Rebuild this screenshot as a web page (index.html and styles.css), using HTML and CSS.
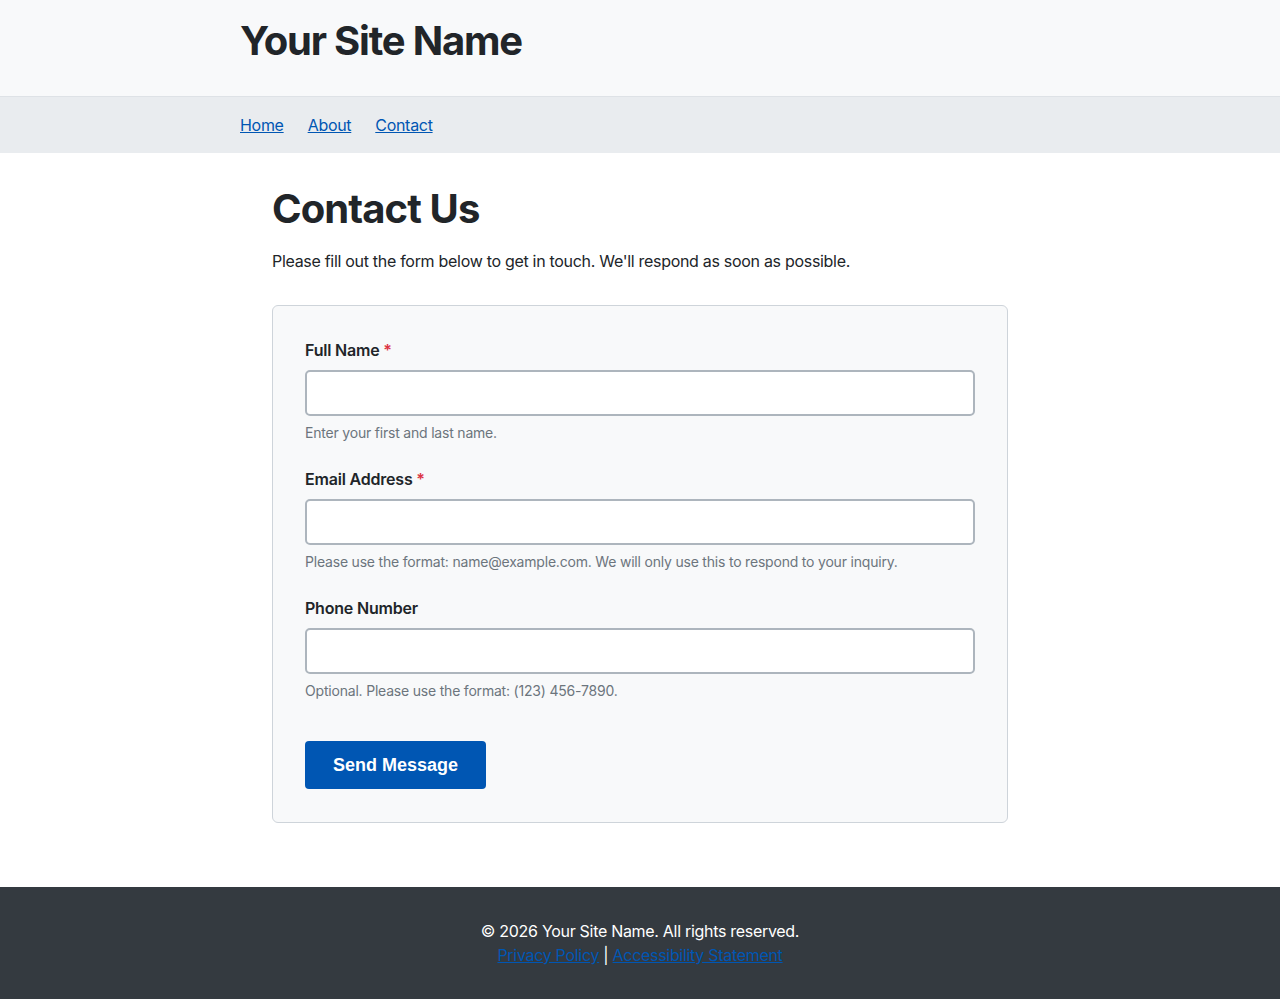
FILE: index.html
```html
<!DOCTYPE html>
<html lang="en">
<head>
<meta charset="utf-8">
<title>Contact Us - Your Site Name</title>
<link rel="stylesheet" href="styles.css">
</head>
<body>
<header class="site-header">
  <div class="container">
    <h1 class="site-name">Your Site Name</h1>
  </div>
</header>
<nav class="site-nav">
  <div class="container">
    <ul class="nav-list">
      <li><a href="#">Home</a></li>
      <li><a href="#">About</a></li>
      <li><a href="#">Contact</a></li>
    </ul>
  </div>
</nav>
<main class="main">
  <div class="container main-inner">
    <h2 class="page-title">Contact Us</h2>
    <p class="intro">Please fill out the form below to get in touch. We'll respond as soon as possible.</p>
    <form class="card">
      <div class="field">
        <label class="label" for="name">Full Name <span class="req">*</span></label>
        <input class="input" id="name" type="text">
        <p class="help">Enter your first and last name.</p>
      </div>
      <div class="field">
        <label class="label" for="email">Email Address <span class="req">*</span></label>
        <input class="input" id="email" type="email">
        <p class="help">Please use the format: name@example.com. We will only use this to respond to your inquiry.</p>
      </div>
      <div class="field">
        <label class="label" for="phone">Phone Number</label>
        <input class="input" id="phone" type="tel">
        <p class="help">Optional. Please use the format: (123) 456-7890.</p>
      </div>
      <button class="btn" type="button">Send Message</button>
    </form>
  </div>
</main>
<footer class="site-footer">
  <p class="copy">© 2026 Your Site Name. All rights reserved.</p>
  <p class="links"><a href="#">Privacy Policy</a> <span class="sep">|</span> <a href="#">Accessibility Statement</a></p>
</footer>
</body>
</html>
```
FILE: styles.css
```css
* { box-sizing: border-box; }
html, body { margin: 0; padding: 0; }
body {
  font-family: Inter, "Noto Sans", sans-serif;
  font-size: 16px;
  line-height: 1.5;
  letter-spacing: -0.3px;
  color: #212529;
  background: #fff;
}
.container {
  max-width: 800px;
  margin: 0 auto;
}
.site-header {
  background: #f8f9fa;
  border-bottom: 1px solid #dee2e6;
  padding: 17px 0 31px;
}
.site-name {
  margin: 0;
  font-size: 40px;
  line-height: 48px;
  font-weight: 700;
  letter-spacing: -1.2px;
  color: #212529;
}
.site-nav {
  background: #e9ecef;
  padding: 16px 0;
}
.nav-list {
  list-style: none;
  margin: 0;
  padding: 0;
  display: flex;
  gap: 24px;
}
.nav-list a {
  color: #0056b3;
  text-decoration: underline;
}
.main-inner {
  padding: 32px 32px 64px;
}
.page-title {
  margin: 0 0 16px;
  font-size: 40px;
  line-height: 48px;
  font-weight: 700;
  letter-spacing: -0.9px;
}
.intro {
  margin: 0 0 32px;
}
.card {
  background: #f8f9fa;
  border: 1px solid #ced4da;
  border-radius: 6px;
  padding: 32px 32px 33px;
}
.field {
  margin-bottom: 24px;
}
.label {
  display: block;
  font-weight: 600;
  letter-spacing: -0.2px;
  margin-bottom: 8px;
}
.req {
  color: #dc3545;
}
.input {
  display: block;
  width: 100%;
  height: 46px;
  border: 2px solid #adb5bd;
  border-radius: 5px;
  background: #fff;
  font: inherit;
  padding: 8px 12px;
}
.help {
  margin: 6px 0 0;
  font-size: 14px;
  line-height: 21px;
  letter-spacing: -0.2px;
  color: #6c757d;
}
.btn {
  display: block;
  margin-top: 40px;
  height: 48px;
  padding: 0 28px;
  background: #0056b3;
  color: #fff;
  border: none;
  border-radius: 4px;
  font-family: "Liberation Sans", Arial, sans-serif;
  font-weight: 700;
  font-size: 18px;
  letter-spacing: 0;
}
.site-footer {
  background: #343a40;
  color: #fff;
  text-align: center;
  padding: 32px 0;
}
.site-footer p { margin: 0; }
.site-footer a { color: #0056b3; }
.sep { color: #fff; }
```
